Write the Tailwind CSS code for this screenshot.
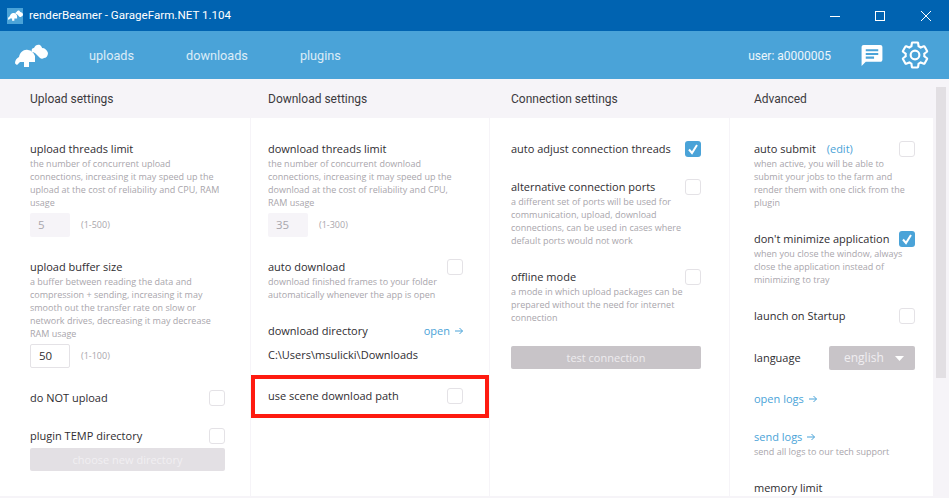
<!DOCTYPE html>
<html lang="en">
<head>
    <meta charset="UTF-8">
    <title>renderBeamer - GarageFarm.NET 1.104</title>
    <script src="https://cdn.jsdelivr.net/npm/@tailwindcss/browser@4"></script>
</head>
<body class="h-[498px] overflow-hidden bg-[#f6f4f8] font-['Open_Sans',sans-serif] text-[#3c3a3e]">

    <!-- Title bar -->
    <div class="h-[31px] bg-[#0063b1] flex items-center text-white">
        <div class="ml-[7px] w-4 h-4 bg-[#4aa3d8] flex items-center justify-center">
            <svg width="15" height="11" viewBox="0 0 33 23" fill="#fff"><path d="M0 19c0-3 2-5 4-6 1-5 5-8 9-7 3 0 6 3 7 6v6h-6v5H9v-5H5l-3 3c-1-1-2-1-2-2z"/><path d="M17 8c-1-2 0-4 2-4 1-3 4-4 6-3 1 1 2 2 2 3 3 0 5 2 6 5 0 3-2 5-4 5-1 1-3 1-4 0l-4-4c-1-1-2-2-4-2z"/></svg>
        </div>
        <div class="ml-[6px] text-[11.6px] font-['Roboto',sans-serif]">renderBeamer - GarageFarm.NET 1.104</div>
        <div class="ml-auto flex items-center">
            <svg width="10" height="10" viewBox="0 0 10 10" class="mr-[35px]"><path d="M0 5.500h10" stroke="#fff"/></svg>
            <svg width="10" height="10" viewBox="0 0 10 10" class="mr-[36px]"><rect x=".5" y=".5" width="9" height="9" fill="none" stroke="#fff"/></svg>
            <svg width="10" height="10" viewBox="0 0 10 10" class="mr-[18px]"><path d="M0 0l10 10M10 0L0 10" stroke="#fff"/></svg>
        </div>
    </div>

    <!-- Nav -->
    <div class="h-[48px] bg-[#4aa3d8] flex items-center text-white/80 font-['Roboto',sans-serif]">
        <svg width="33" height="23" viewBox="0 0 33 23" fill="#fff" class="ml-[15px]"><path d="M0 19c0-3 2-5 4-6 1-5 5-8 9-7 3 0 6 3 7 6v6h-6v5H9v-5H5l-3 3c-1-1-2-1-2-2z"/><path d="M17 8c-1-2 0-4 2-4 1-3 4-4 6-3 1 1 2 2 2 3 3 0 5 2 6 5 0 3-2 5-4 5-1 1-3 1-4 0l-4-4c-1-1-2-2-4-2z"/></svg>
        <div class="ml-[41px] pt-[2px] text-[12.7px]">uploads</div>
        <div class="ml-[52px] pt-[2px] text-[12.7px]">downloads</div>
        <div class="ml-[52px] pt-[2px] text-[12.7px]">plugins</div>
        <div class="ml-auto pt-[2px] text-[12px] text-white/90">user: a0000005</div>
        <svg width="26" height="25" viewBox="0 0 24 24" class="ml-[28px]" fill="#fff"><path d="M20 2H4c-1.100 0-2 .9-2 2v18l4-4h14c1.100 0 2-.9 2-2V4c0-1.100-.9-2-2-2z"/><path d="M6 6h12v2H6zM6 9.500h12v2H6zM6 13h8v2H6z" fill="#4aa3d8"/></svg>
        <svg width="30" height="30" viewBox="0 0 24 24" class="ml-[15px] mr-[19px]" fill="none" stroke="#fff" stroke-width="1.700"><path d="M19.430 12.980c.04-.32.07-.64.07-.98s-.03-.66-.07-.98l2.110-1.650c.19-.15.24-.42.12-.64l-2-3.460c-.12-.22-.39-.3-.61-.22l-2.490 1c-.52-.4-1.080-.73-1.690-.98l-.38-2.650C14.460 2.180 14.250 2 14 2h-4c-.25 0-.46.18-.49.42l-.38 2.650c-.61.25-1.170.59-1.690.98l-2.490-1c-.23-.09-.49 0-.61.22l-2 3.460c-.13.22-.07.49.12.64l2.110 1.650c-.04.32-.07.65-.07.98s.03.66.07.98l-2.110 1.650c-.19.15-.24.42-.12.64l2 3.460c.12.22.39.3.61.22l2.490-1c.52.4 1.080.73 1.690.98l.38 2.650c.03.24.24.42.49.42h4c.25 0 .46-.18.49-.42l.38-2.650c.61-.25 1.170-.59 1.690-.98l2.490 1c.23.09.49 0 .61-.22l2-3.460c.12-.22.07-.49-.12-.64l-2.110-1.650z"/><circle cx="12" cy="12" r="3.500"/></svg>
    </div>

    <div class="flex h-[419px]">
        <!-- Upload settings -->
        <div class="w-[250px] flex flex-col">
            <div class="h-[39px] shrink-0 pl-[30px] pt-[12px] text-[12px] leading-[16px] font-['Roboto',sans-serif]">Upload settings</div>
            <div class="h-[378px] bg-white pl-[30px] pr-[25px] pt-[23px] overflow-hidden">
                <div class="text-[11px] leading-[16px] text-[#2f2d31]">upload threads limit</div>
                <div class="text-[9px] leading-[13px] text-[#a9a6ac] whitespace-nowrap">the number of concurrent upload<br>connections, increasing it may speed up the<br>upload at the cost of reliability and CPU, RAM<br>usage</div>
                <div class="mt-1 flex items-center h-6">
                    <div class="w-10 h-6 bg-[#f6f4f8] rounded-[2px] pl-2 text-[11.5px] leading-6 text-[#a9a6ac]">5</div>
                    <div class="ml-[11px] text-[9px] text-[#a9a6ac]">(1-500)</div>
                </div>
                <div class="mt-[22px] text-[11px] leading-[16px] text-[#2f2d31]">upload buffer size</div>
                <div class="text-[9px] leading-[13px] text-[#a9a6ac] whitespace-nowrap">a buffer between reading the data and<br>compression + sending, increasing it may<br>smooth out the transfer rate on slow or<br>network drives, decreasing it may decrease<br>RAM usage</div>
                <div class="mt-1 flex items-center h-6">
                    <div class="w-10 h-6 border border-[#e4e2e6] rounded-[2px] pl-2 text-[11.5px] leading-[22px] text-[#2f2d31]">50</div>
                    <div class="ml-[11px] text-[9px] text-[#a9a6ac]">(1-100)</div>
                </div>
                <div class="mt-[22px] h-4 flex justify-between items-center text-[11px] text-[#2f2d31]">do NOT upload<div class="w-4 h-4 border border-[#e4e2e6] rounded-[3px]"></div></div>
                <div class="mt-[22px] h-4 flex justify-between items-center text-[11px] text-[#2f2d31]">plugin TEMP directory<div class="w-4 h-4 border border-[#e4e2e6] rounded-[3px]"></div></div>
                <div class="mt-1 h-[23px] bg-[#e3e0e4] rounded-[2px] text-center text-[11px] leading-[23px] text-[#f1eff2]">choose new directory</div>
            </div>
        </div>

        <!-- Download settings -->
        <div class="w-[238px] ml-px flex flex-col">
            <div class="h-[39px] shrink-0 pl-[17px] pt-[12px] text-[12px] leading-[16px] font-['Roboto',sans-serif]">Download settings</div>
            <div class="h-[378px] bg-white pt-[23px] overflow-hidden">
                <div class="pl-[17px] pr-[26px]">
                    <div class="text-[11px] leading-[16px] text-[#2f2d31]">download threads limit</div>
                    <div class="text-[9px] leading-[13px] text-[#a9a6ac] whitespace-nowrap">the number of concurrent download<br>connections, increasing it may speed up the<br>download at the cost of reliability and CPU,<br>RAM usage</div>
                    <div class="mt-1 flex items-center h-6">
                        <div class="w-10 h-6 bg-[#f6f4f8] rounded-[2px] pl-2 text-[11.5px] leading-6 text-[#a9a6ac]">35</div>
                        <div class="ml-[11px] text-[9px] text-[#a9a6ac]">(1-300)</div>
                    </div>
                    <div class="mt-[22px] h-4 flex justify-between items-center text-[11px] text-[#2f2d31]">auto download<div class="w-4 h-4 border border-[#e4e2e6] rounded-[3px]"></div></div>
                    <div class="text-[9px] leading-[13px] text-[#a9a6ac] whitespace-nowrap">download finished frames to your folder<br>automatically whenever the app is open</div>
                    <div class="mt-[22px] h-4 flex justify-between items-center text-[11px] text-[#2f2d31]">download directory
                        <div class="flex items-center gap-[5px] text-[#4aa3d8]">open<svg width="8" height="8" viewBox="0 0 8 8" fill="none" stroke="#4aa3d8"><path d="M0 4h7.500M4.500 1l3 3-3 3"/></svg></div>
                    </div>
                    <div class="mt-2 h-4 text-[11px] leading-4 text-[#2f2d31]">C:\Users\msulicki\Downloads</div>
                </div>
                <div class="mt-3 h-[43px] border-4 border-[#fe1a10] pb-[1px] pl-[13px] pr-[22px] flex justify-between items-center text-[11px] text-[#2f2d31]">use scene download path<div class="w-4 h-4 border border-[#e4e2e6] rounded-[3px]"></div></div>
            </div>
        </div>

        <!-- Connection settings -->
        <div class="w-[239px] ml-px flex flex-col">
            <div class="h-[39px] shrink-0 pl-[21px] pt-[12px] text-[12px] leading-[16px] font-['Roboto',sans-serif]">Connection settings</div>
            <div class="h-[378px] bg-white pl-[21px] pr-[28px] pt-[23px] overflow-hidden">
                <div class="h-4 flex justify-between items-center text-[11px] text-[#2f2d31]">auto adjust connection threads
                    <div class="w-4 h-4 bg-[#4aa3d8] rounded-[3px] flex items-center justify-center"><svg width="12" height="12" viewBox="0 0 12 12" fill="none" stroke="#fff" stroke-width="2"><path d="M2 6.500l3 3.500 5-8"/></svg></div>
                </div>
                <div class="mt-[22px] h-4 flex justify-between items-center text-[11px] text-[#2f2d31]">alternative connection ports<div class="w-4 h-4 border border-[#e4e2e6] rounded-[3px]"></div></div>
                <div class="text-[9px] leading-[13px] text-[#a9a6ac] whitespace-nowrap">a different set of ports will be used for<br>communication, upload, download<br>connections, can be used in cases where<br>default ports would not work</div>
                <div class="mt-[22px] h-4 flex justify-between items-center text-[11px] text-[#2f2d31]">offline mode<div class="w-4 h-4 border border-[#e4e2e6] rounded-[3px]"></div></div>
                <div class="text-[9px] leading-[13px] text-[#a9a6ac] whitespace-nowrap">a mode in which upload packages can be<br>prepared without the need for internet<br>connection</div>
                <div class="mt-[22px] h-[23px] bg-[#c8c4c8] rounded-[2px] text-center text-[11px] leading-[23px] text-[#eeecef]">test connection</div>
            </div>
        </div>

        <!-- Advanced -->
        <div class="w-[203px] ml-px flex flex-col">
            <div class="h-[39px] shrink-0 pl-[24px] pt-[12px] text-[12px] leading-[16px] font-['Roboto',sans-serif]">Advanced</div>
            <div class="h-[378px] bg-white pl-[24px] pr-[18px] pt-[23px] overflow-hidden">
                <div class="h-4 flex justify-between items-center text-[11px] text-[#2f2d31]"><div>auto submit <span class="ml-2 text-[#4aa3d8]">(edit)</span></div><div class="w-4 h-4 border border-[#e4e2e6] rounded-[3px]"></div></div>
                <div class="text-[9px] leading-[13px] text-[#a9a6ac] whitespace-nowrap">when active, you will be able to<br>submit your jobs to the farm and<br>render them with one click from the<br>plugin</div>
                <div class="mt-[22px] h-4 flex justify-between items-center text-[11px] text-[#2f2d31]">don't minimize application
                    <div class="w-4 h-4 bg-[#4aa3d8] rounded-[3px] flex items-center justify-center"><svg width="12" height="12" viewBox="0 0 12 12" fill="none" stroke="#fff" stroke-width="2"><path d="M2 6.500l3 3.500 5-8"/></svg></div>
                </div>
                <div class="text-[9px] leading-[13px] text-[#a9a6ac] whitespace-nowrap">when you close the window, always<br>close the application instead of<br>minimizing to tray</div>
                <div class="mt-[22px] h-4 flex justify-between items-center text-[11px] text-[#2f2d31]">launch on Startup<div class="w-4 h-4 border border-[#e4e2e6] rounded-[3px]"></div></div>
                <div class="mt-[22px] h-6 flex justify-between items-center text-[11px] text-[#2f2d31]">language
                    <div class="w-[86px] h-6 bg-[#c8c4c8] rounded-[2px] flex items-center pl-[15px] pr-[11px] justify-between text-[12px] text-[#f0eef1]">english<svg width="9" height="5" viewBox="0 0 9 5" fill="#fff"><path d="M0 0h9L4.500 5z"/></svg></div>
                </div>
                <div class="mt-[21px] h-4 flex items-center gap-[5px] text-[11px] text-[#4aa3d8]">open logs<svg width="8" height="8" viewBox="0 0 8 8" fill="none" stroke="#4aa3d8"><path d="M0 4h7.500M4.500 1l3 3-3 3"/></svg></div>
                <div class="mt-[22px] h-4 flex items-center gap-[5px] text-[11px] text-[#4aa3d8]">send logs<svg width="8" height="8" viewBox="0 0 8 8" fill="none" stroke="#4aa3d8"><path d="M0 4h7.500M4.500 1l3 3-3 3"/></svg></div>
                <div class="text-[9px] leading-[13px] text-[#a9a6ac] whitespace-nowrap">send all logs to our tech support</div>
                <div class="mt-[22px] h-4 leading-4 text-[11px] text-[#2f2d31]">memory limit</div>
            </div>
        </div>

        <!-- Scrollbar -->
        <div class="ml-[3px] mt-2 w-[10px] h-[291px] bg-[#e2dfe3]"></div>
    </div>
</body>
</html>
